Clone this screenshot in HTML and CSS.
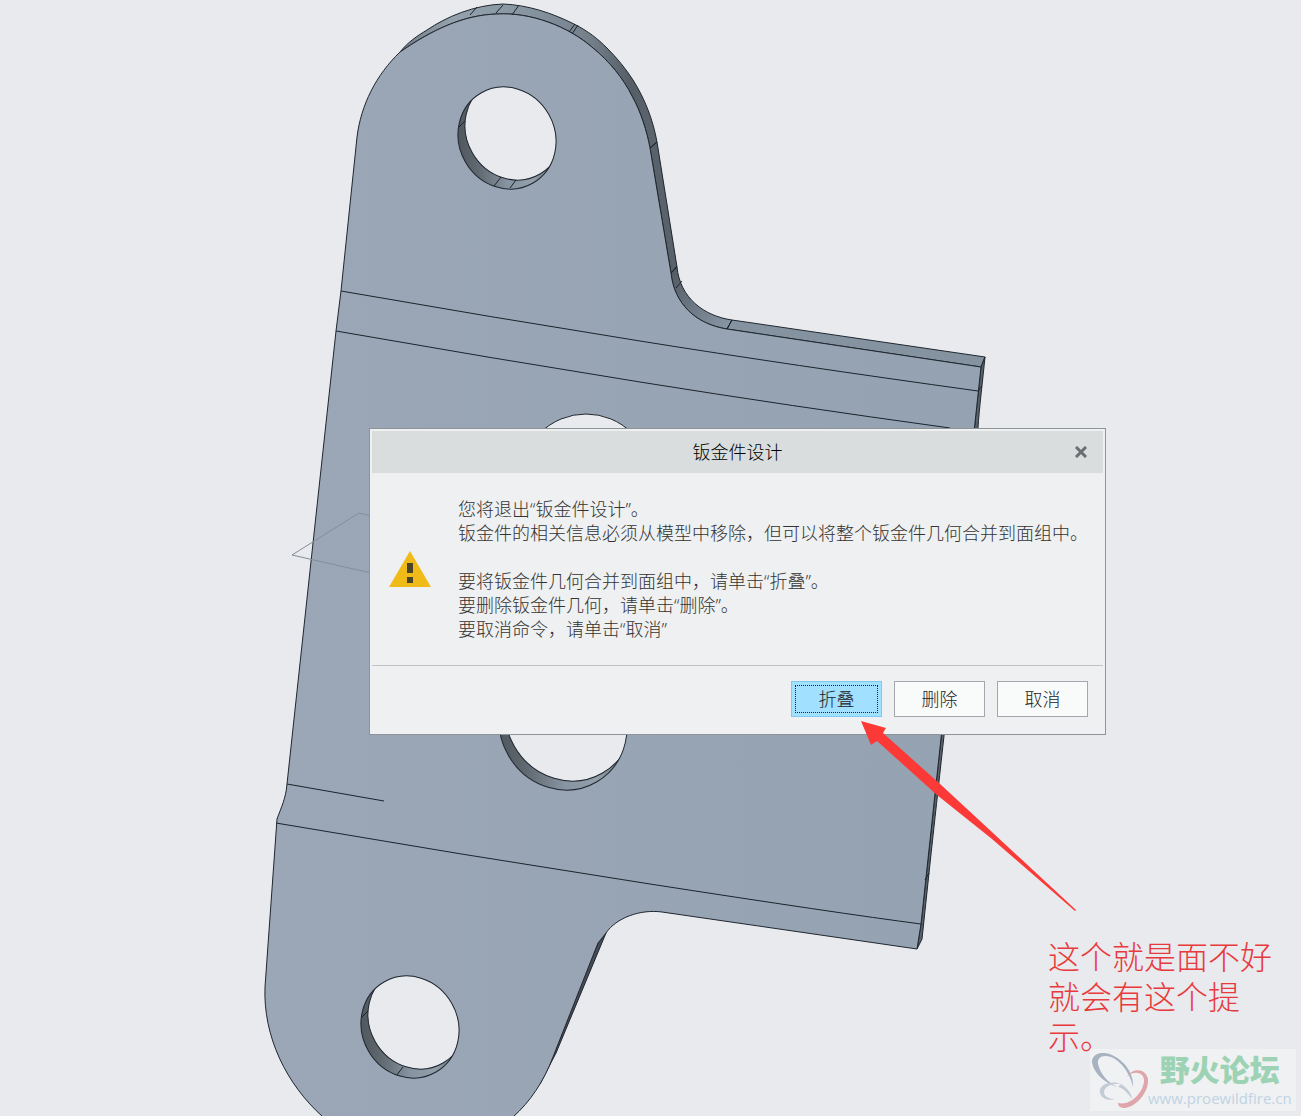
FILE: index.html
```
<!DOCTYPE html>
<html lang="zh-CN">
<head>
    <meta charset="UTF-8">
    <meta name="viewport" content="width=device-width, initial-scale=1">
    <title>钣金件设计</title>
    <link rel="stylesheet" href="styles.css">
</head>
<body>
    <div class="workspace">
        <!-- 钣金件模型 -->
        <svg class="model" viewBox="0 0 1301 1116" preserveAspectRatio="xMidYMid slice" aria-hidden="true">
            <defs>
                <linearGradient id="face" x1="0" y1="0" x2="1" y2="0">
                    <stop offset="0" stop-color="#9ba7b7"/>
                    <stop offset="1" stop-color="#95a2b2"/>
                </linearGradient>
                <linearGradient id="rim" gradientUnits="userSpaceOnUse" x1="400" y1="0" x2="657" y2="0">
                    <stop offset="0" stop-color="#6f7a84"/>
                    <stop offset="0.2" stop-color="#94a2ad"/>
                    <stop offset="0.5" stop-color="#8795a1"/>
                    <stop offset="0.75" stop-color="#737e88"/>
                    <stop offset="0.9" stop-color="#555d66"/>
                    <stop offset="1" stop-color="#5d656e"/>
                </linearGradient>
                <linearGradient id="fillet" gradientUnits="userSpaceOnUse" x1="672" y1="270" x2="731" y2="325">
                    <stop offset="0" stop-color="#525a63"/>
                    <stop offset="1" stop-color="#8896a4"/>
                </linearGradient>
                <linearGradient id="wall" x1="0" y1="0" x2="1" y2="0">
                    <stop offset="0" stop-color="#4f565e"/>
                    <stop offset="0.2" stop-color="#5f676f"/>
                    <stop offset="0.5" stop-color="#8693a0"/>
                    <stop offset="0.75" stop-color="#93a0ab"/>
                    <stop offset="1" stop-color="#5f6870"/>
                </linearGradient>
                <clipPath id="clip-top"><ellipse cx="507" cy="138" rx="48" ry="52" transform="rotate(-30 507 138)"/></clipPath>
                <clipPath id="clip-mid"><ellipse cx="563" cy="724" rx="63" ry="67" transform="rotate(-30 563 724)"/></clipPath>
                <clipPath id="clip-bottom"><ellipse cx="410" cy="1027" rx="48" ry="52" transform="rotate(-30 410 1027)"/></clipPath>
            </defs>

            <!-- 板厚侧面 -->
            <g class="edge">
                <path fill="url(#rim)" d="M400 52C408 42 417 36 427 30C446 17 474 5 503 4C528 5 552 13 574 24C588 31 598 39 607 48C617 58 626 69 633 80C645 99 653 120 657 142L650 148C647 132 641 112 632 96C623 78 609 61 593 48C568 26 530 12 497 14C463 15 432 30 400 52Z"/>
                <path fill="#59616a" d="M657 142L677 267L671 273L650 148Z"/>
                <path fill="url(#fillet)" d="M677 267C680 298 704 316 732 320L727 329C695 324 674 303 671 273Z"/>
                <path fill="#8593a1" d="M732 320L985 357L981 367L727 329Z"/>
                <path fill="#59616a" d="M985 357C983 378 979 410 978 428C966 540 940 770 929 873L922 939L917 949L921 924L981 367Z"/>
                <path fill="#454c55" d="M606 933L556 1053L540 1084L598 943Z"/>
            </g>

            <!-- 正面 -->
            <path class="edge" fill="url(#face)" d="M341 291L357 137C361 105 376 75 400 52C432 30 463 15 497 14C530 12 568 26 593 48C609 61 623 78 632 96C641 112 647 132 650 148L671 273C674 303 695 324 727 329L981 367L921 924L917 949L662 912C640 909 616 918 606 933L598 943L553 1057C544 1081 530 1102 513 1117L323 1117C286 1084 263 1036 265 987L277 819C281 808 286 798 287 784L309 580L336 331Z"/>

            <!-- 折弯线 -->
            <g class="line">
                <path d="M341 291Q490 317 640 341T978 391"/>
                <path d="M336 331Q490 358 640 382T950 428"/>
                <path d="M287 784L384 801"/>
                <path d="M276 823Q463 855 650 884T921 924"/>
                <path d="M470 15L477 7M496 13L503 5M512 15L519 5M569 32L575 24M572 34L578 25M650 148L657 142M671 273L677 266M676 288L682 281M727 329L732 320M978 391L982 386M925 880L929 873"/>
            </g>

            <!-- 孔 -->
            <g clip-path="url(#clip-top)">
                <rect x="457" y="86" width="100" height="104" fill="url(#wall)"/>
                <ellipse class="hole" cx="514" cy="129" rx="48" ry="52" transform="rotate(-30 514 129)"/>
                <path class="line" d="M458 128L465 121M494 186L501 177M510 188L516 180"/>
            </g>
            <ellipse class="edge outline" cx="507" cy="138" rx="48" ry="52" transform="rotate(-30 507 138)"/>

            <ellipse class="hole" cx="586" cy="479" rx="65" ry="65"/>
            <g clip-path="url(#clip-mid)">
                <rect x="498" y="655" width="132" height="136" fill="url(#wall)"/>
                <ellipse class="hole" cx="569" cy="715" rx="63" ry="67" transform="rotate(-30 569 715)"/>
            </g>
            <ellipse class="edge outline" cx="563" cy="724" rx="63" ry="67" transform="rotate(-30 563 724)"/>

            <g clip-path="url(#clip-bottom)">
                <rect x="360" y="976" width="100" height="104" fill="url(#wall)"/>
                <ellipse class="hole" cx="417" cy="1018" rx="48" ry="52" transform="rotate(-30 417 1018)"/>
                <path class="line" d="M361 1018L368 1011M396 1076L403 1067"/>
            </g>
            <ellipse class="edge outline" cx="410" cy="1027" rx="48" ry="52" transform="rotate(-30 410 1027)"/>

            <!-- 基准标记 -->
            <path class="datum" d="M380 518L359 513L292 555L380 575"/>
        </svg>

        <div class="dialog" role="dialog" aria-labelledby="dialog-title">
            <div class="dialog-header">
                <h1 class="dialog-title" id="dialog-title">钣金件设计</h1>
                <button class="close" type="button" aria-label="关闭">
                    <svg width="12" height="12" viewBox="0 0 12 12"><path d="M1 1L11 11M11 1L1 11"/></svg>
                </button>
            </div>
            <div class="dialog-body">
                <svg class="warning" width="42" height="36" viewBox="0 0 42 36" aria-hidden="true">
                    <path fill="#f0bb18" d="M21 0L42 36H0Z"/>
                    <path fill="#4a4426" d="M18 12H24V22H18ZM18 26H24V32H18Z"/>
                </svg>
                <div class="message">
                    <p>您将退出“钣金件设计”。<br>钣金件的相关信息必须从模型中移除，但可以将整个钣金件几何合并到面组中。</p>
                    <p>要将钣金件几何合并到面组中，请单击“折叠”。<br>要删除钣金件几何，请单击“删除”。<br>要取消命令，请单击“取消”</p>
                </div>
            </div>
            <div class="dialog-footer">
                <button class="button primary" type="button">折叠</button>
                <button class="button" type="button">删除</button>
                <button class="button" type="button">取消</button>
            </div>
        </div>

        <!-- 箭头 -->
        <svg class="arrow" width="216" height="191" viewBox="0 0 216 191" aria-hidden="true">
            <path fill="#fb3a38" d="M0 0L25 7L22 12L78 62L132 112L215 189L214 190L131 118L76 74L16 20L10 24Z"/>
        </svg>
        <p class="note">这个就是面不好就会有这个提示。</p>

        <div class="watermark">
            <svg class="logo" width="58" height="60" viewBox="0 0 58 60" aria-hidden="true">
                <path fill="#a8b3c2" d="M27 37C12 32 2 20 2 11C3 3 13 1 22 5C35 11 44 24 43 37C40 23 31 11 21 7C12 4 7 8 8 14C10 23 17 32 27 37Z"/>
                <path fill="#c3cbd5" d="M31 34C20 30 8 35 10 43C12 49 18 51 25 49C18 49 14 46 14 42C15 36 22 33 31 34ZM31 34C37 38 41 42 42 49C37 42 33 38 28 37Z"/>
                <path fill="#dfa5aa" d="M37 26C44 17 56 19 58 29C59 43 45 58 33 58C29 57 28 55 28 53C40 56 52 44 54 32C55 22 45 20 37 26Z"/>
            </svg>
            <div class="site">
                <strong class="site-name">野火论坛</strong>
                <a class="site-link" href="#">www.proewildfire.cn</a>
            </div>
        </div>
    </div>
</body>
</html>
```
FILE: styles.css
```
        body {
            font-family: "Open Sans", "Noto Sans CJK SC", sans-serif;
            background-color: #e8eaed;
            margin: 0;
            padding: 0;
        }

        .workspace {
            position: relative;
            height: 100vh;
            overflow: hidden;
        }

        .model {
            display: block;
            width: 100%;
            height: 100%;
        }

        .edge {
            stroke: #1f262e;
            stroke-width: 1;
            stroke-linejoin: round;
        }

        .outline {
            fill: none;
        }

        .line {
            fill: none;
            stroke: #1b232c;
            stroke-width: 1;
        }

        .hole {
            fill: #e8eaed;
            stroke: #1f262e;
        }

        .datum {
            fill: none;
            stroke: #858d98;
            stroke-width: 1;
        }

        /* 对话框 */
        .dialog {
            position: absolute;
            left: 369px;
            top: 428px;
            box-sizing: border-box;
            padding: 2px;
            border: 1px solid #8f9499;
            background-color: #eef0f1;
            color: #333;
        }

        .dialog-header {
            display: flex;
            align-items: center;
            height: 42px;
            padding: 0 16px;
            background-color: #d9dddd;
        }

        .dialog-title {
            flex: 1;
            margin: 0;
            padding-left: 12px;
            font-size: 18px;
            font-weight: 300;
            line-height: 24px;
            text-align: center;
            color: #000;
        }

        .close {
            display: flex;
            padding: 0;
            border: none;
            background: none;
            cursor: pointer;
        }

        .close path {
            stroke: #6b6e70;
            stroke-width: 3;
        }

        .dialog-body {
            display: flex;
            align-items: center;
            gap: 27px;
            padding: 24px 15px 24px 17px;
            border-bottom: 1px solid #bfc3c6;
        }

        .message {
            font-size: 18px;
            font-weight: 300;
            line-height: 24px;
            white-space: nowrap;
        }

        .message p {
            margin: 0;
        }

        .message p + p {
            margin-top: 24px;
        }

        .dialog-footer {
            display: flex;
            justify-content: flex-end;
            gap: 12px;
            padding: 15px;
        }

        .button {
            width: 91px;
            height: 36px;
            padding: 0;
            border: 1px solid #a4a8ac;
            background-color: #f9fafa;
            font-family: inherit;
            font-size: 18px;
            font-weight: 300;
            line-height: 24px;
            color: #222;
            cursor: pointer;
        }

        .primary {
            border-color: #7fc8ee;
            background-color: #a1e0fe;
            outline: 1px dotted #222;
            outline-offset: -5px;
        }

        /* 标注 */
        .arrow {
            position: absolute;
            left: 861px;
            top: 721px;
        }

        .note {
            position: absolute;
            left: 1048px;
            top: 938px;
            width: 224px;
            margin: 0;
            font-family: "Liberation Serif", "Noto Sans CJK SC", serif;
            font-size: 32px;
            font-weight: 300;
            line-height: 40px;
            color: #e8393c;
        }

        /* 水印 */
        .watermark {
            position: absolute;
            right: 5px;
            bottom: 5px;
            display: flex;
            align-items: center;
            box-sizing: border-box;
            width: 206px;
            height: 62px;
            background-color: #eff1f3;
        }

        .site {
            display: flex;
            flex-direction: column;
            align-items: center;
        }

        .site-name {
            font-size: 30px;
            font-weight: 900;
            line-height: 36px;
            color: #9dd3b4;
        }

        .site-link {
            font-size: 15px;
            line-height: 20px;
            color: #c1d3e2;
            text-decoration: none;
        }
```
